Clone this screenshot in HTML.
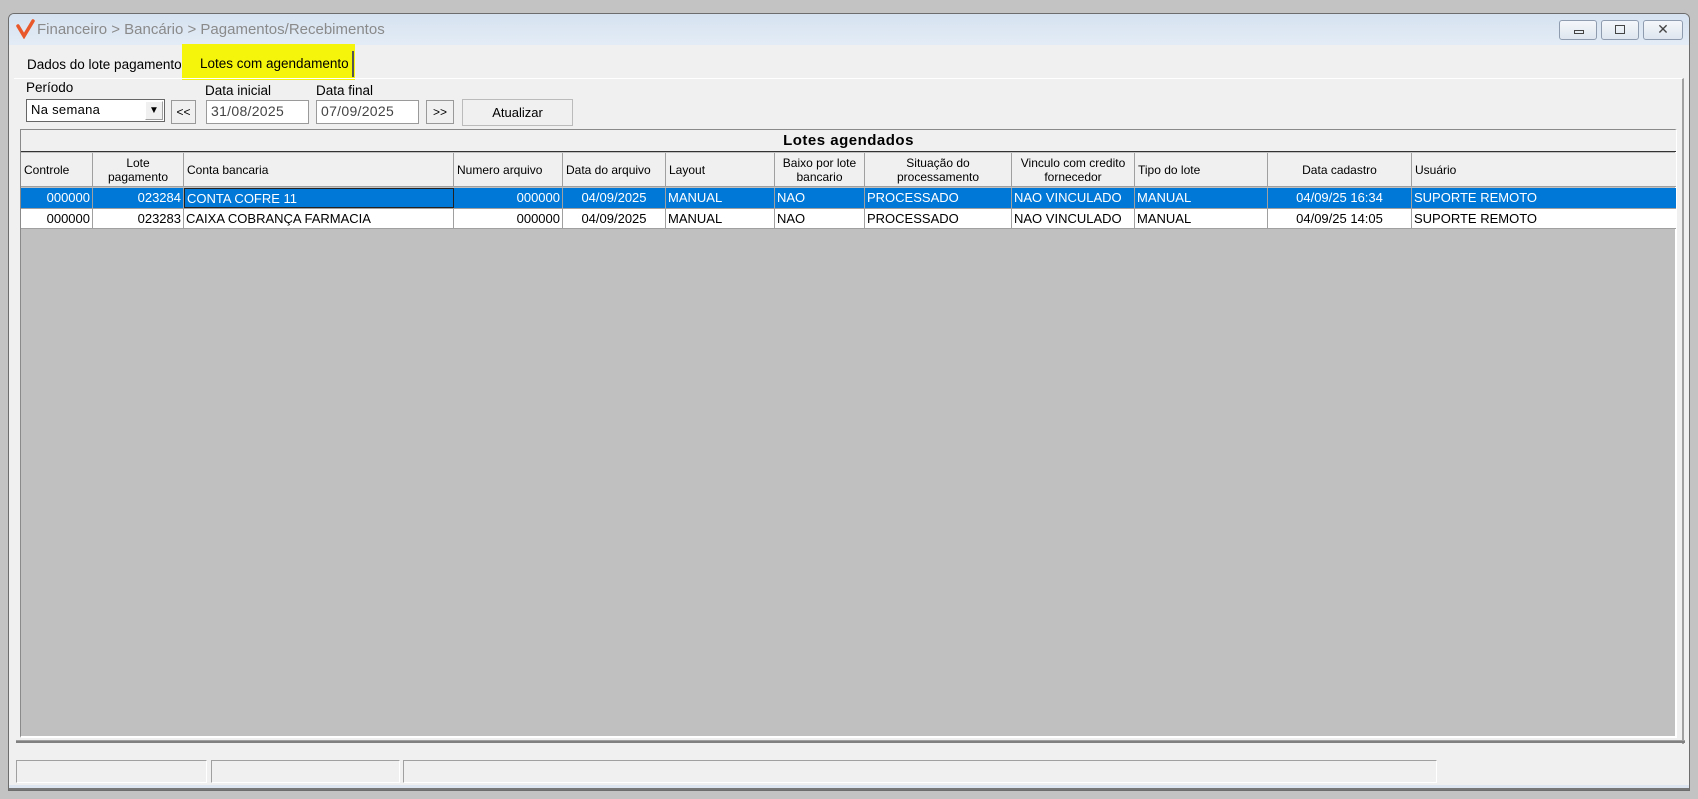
<!DOCTYPE html>
<html><head><meta charset="utf-8"><style>
*{margin:0;padding:0;box-sizing:border-box}
body{width:1698px;height:799px;background:#c3c3c3;position:relative;overflow:hidden;font-family:"Liberation Sans",sans-serif;font-size:12px;color:#000}
.a{position:absolute}
.win{left:8px;top:13px;width:1682px;height:778px;background:#f0f0f0;border:1px solid #6d6d6d;border-radius:6px 6px 0 0}
.title{left:9px;top:14px;width:1680px;height:31px;background:linear-gradient(#d6e2f0,#e3ecf6);border-radius:5px 5px 0 0}
.btn{background:#f0f0f0;border:1px solid;border-color:#fff #a0a0a0 #a0a0a0 #fff;text-align:center;line-height:22px}
.inp{background:#fff;border:1px solid #9a9a9a;font-size:14px;color:#444;padding-left:4px;line-height:20px;letter-spacing:.3px}
.c{position:absolute;overflow:hidden;white-space:nowrap;border-right:1px solid #a0a0a0;height:100%}
.hd .c{font-size:12px;line-height:14px;display:flex;align-items:center;padding:0 3px}
.row .c{font-size:13px;line-height:20px;padding:0 2px;letter-spacing:0}
.r{text-align:right}.m{text-align:center;justify-content:center}
</style></head><body>
<div class="a win"></div>
<div class="a title"></div>
<svg class="a" style="left:16px;top:19px" width="20" height="20" viewBox="0 0 20 20"><path d="M2 7 L8 17 L17 2" fill="none" stroke="#e8582a" stroke-width="3.5" stroke-linecap="round"/></svg>
<div class="a" style="left:37px;top:21px;font-size:15px;color:#8a8a8a">Financeiro &gt; Bancário &gt; Pagamentos/Recebimentos</div>
<div class="a btn" style="left:1559px;top:20px;width:38px;height:20px;border:1px solid #8f9cb0;border-radius:3px;background:linear-gradient(#f4f7fb,#dfe6ef)"><div class="a" style="left:14px;top:9px;width:10px;height:4px;border:1px solid #444"></div></div>
<div class="a btn" style="left:1601px;top:20px;width:38px;height:20px;border:1px solid #8f9cb0;border-radius:3px;background:linear-gradient(#f4f7fb,#dfe6ef)"><div class="a" style="left:13px;top:4px;width:10px;height:9px;border:1px solid #444"></div></div>
<div class="a btn" style="left:1643px;top:20px;width:40px;height:20px;border:1px solid #8f9cb0;border-radius:3px;background:linear-gradient(#f4f7fb,#dfe6ef);font-size:14px;line-height:17px;color:#444">✕</div>
<div class="a" style="left:182px;top:44px;width:173px;height:36px;background:#f5f50c"></div>
<div class="a" style="left:14px;top:78px;width:1670px;height:666px;border-top:1px solid #fff;border-right:2px solid #a0a0a0"></div>
<div class="a" style="left:27px;top:57px;font-size:13.5px">Dados do lote pagamento</div>
<div class="a" style="left:200px;top:56px;font-size:13.5px">Lotes com agendamento</div>
<div class="a" style="left:352px;top:51px;width:2px;height:26px;background:#555"></div>
<div class="a" style="left:26px;top:80px;font-size:13.5px">Período</div>
<div class="a inp" style="left:26px;top:99px;width:139px;height:23px;color:#000;font-size:13px;border-color:#666">Na semana</div>
<div class="a btn" style="left:145px;top:101px;width:18px;height:19px;line-height:18px;font-size:10px">▼</div>
<div class="a btn" style="left:171px;top:100px;width:25px;height:24px;border:1px solid #999;font-size:12px">&lt;&lt;</div>
<div class="a" style="left:205px;top:83px;font-size:13.5px">Data inicial</div>
<div class="a inp" style="left:206px;top:100px;width:103px;height:24px">31/08/2025</div>
<div class="a" style="left:316px;top:83px;font-size:13.5px">Data final</div>
<div class="a inp" style="left:316px;top:100px;width:103px;height:24px">07/09/2025</div>
<div class="a btn" style="left:426px;top:100px;width:28px;height:24px;border:1px solid #999;font-size:12px">&gt;&gt;</div>
<div class="a btn" style="left:462px;top:99px;width:111px;height:27px;border:1px solid #bbb;line-height:26px;font-size:13px">Atualizar</div>
<div class="a" style="left:20px;top:129px;width:1657px;height:609px;background:#c0c0c0;border:1px solid #8a8a8a;border-right:2px solid #fff;border-bottom:2px solid #fff"></div>
<div class="a" style="left:21px;top:130px;width:1655px;height:22px;background:#f0f0f0;border-bottom:1px solid #333;text-align:center;font-weight:bold;font-size:15px;line-height:21px;letter-spacing:.5px">Lotes agendados</div>
<div class="a hd" style="left:21px;top:153px;width:1655px;height:34px;background:#f0f0f0;border-bottom:1px solid #a0a0a0">
<div class="c" style="left:0;width:72px">Controle</div>
<div class="c m" style="left:72px;width:91px;text-align:center">Lote<br>pagamento</div>
<div class="c" style="left:163px;width:270px">Conta bancaria</div>
<div class="c" style="left:433px;width:109px">Numero arquivo</div>
<div class="c" style="left:542px;width:103px">Data do arquivo</div>
<div class="c" style="left:645px;width:109px">Layout</div>
<div class="c m" style="left:754px;width:90px;text-align:center">Baixo por lote<br>bancario</div>
<div class="c m" style="left:844px;width:147px;text-align:center">Situação do<br>processamento</div>
<div class="c m" style="left:991px;width:123px;text-align:center">Vinculo com credito<br>fornecedor</div>
<div class="c" style="left:1114px;width:133px">Tipo do lote</div>
<div class="c m" style="left:1247px;width:144px">Data cadastro</div>
<div class="c" style="left:1391px;width:264px;border:none">Usuário</div>
</div>
<div class="a row" style="left:21px;top:188px;width:1655px;height:20px;background:#0078d7;color:#fff">
<div class="c r" style="left:0;width:72px">000000</div>
<div class="c r" style="left:72px;width:91px">023284</div>
<div class="c" style="left:163px;width:270px;border:1px solid #222">CONTA COFRE 11</div>
<div class="c r" style="left:433px;width:109px">000000</div>
<div class="c m" style="left:542px;width:103px">04/09/2025</div>
<div class="c" style="left:645px;width:109px">MANUAL</div>
<div class="c" style="left:754px;width:90px">NAO</div>
<div class="c" style="left:844px;width:147px">PROCESSADO</div>
<div class="c" style="left:991px;width:123px">NAO VINCULADO</div>
<div class="c" style="left:1114px;width:133px">MANUAL</div>
<div class="c m" style="left:1247px;width:144px">04/09/25 16:34</div>
<div class="c" style="left:1391px;width:264px;border:none">SUPORTE REMOTO</div>
</div>
<div class="a row" style="left:21px;top:208px;width:1655px;height:21px;background:#fff;border-top:1px solid #a0a0a0;border-bottom:1px solid #a0a0a0">
<div class="c r" style="left:0;width:72px">000000</div>
<div class="c r" style="left:72px;width:91px">023283</div>
<div class="c" style="left:163px;width:270px">CAIXA COBRANÇA FARMACIA</div>
<div class="c r" style="left:433px;width:109px">000000</div>
<div class="c m" style="left:542px;width:103px">04/09/2025</div>
<div class="c" style="left:645px;width:109px">MANUAL</div>
<div class="c" style="left:754px;width:90px">NAO</div>
<div class="c" style="left:844px;width:147px">PROCESSADO</div>
<div class="c" style="left:991px;width:123px">NAO VINCULADO</div>
<div class="c" style="left:1114px;width:133px">MANUAL</div>
<div class="c m" style="left:1247px;width:144px">04/09/25 14:05</div>
<div class="c" style="left:1391px;width:264px;border:none">SUPORTE REMOTO</div>
</div>
<div class="a" style="left:16px;top:740px;width:1669px;height:3px;background:#808080;border-top:1px solid #a0a0a0"></div>
<div class="a" style="left:16px;top:760px;width:191px;height:23px;border:1px solid;border-color:#a0a0a0 #fff #fff #a0a0a0"></div>
<div class="a" style="left:211px;top:760px;width:189px;height:23px;border:1px solid;border-color:#a0a0a0 #fff #fff #a0a0a0"></div>
<div class="a" style="left:403px;top:760px;width:1034px;height:23px;border:1px solid;border-color:#a0a0a0 #fff #fff #a0a0a0"></div>
<div class="a" style="left:9px;top:785px;width:1680px;height:5px;background:#dde6f0;border-bottom:2px solid #777"></div>
</body></html>
